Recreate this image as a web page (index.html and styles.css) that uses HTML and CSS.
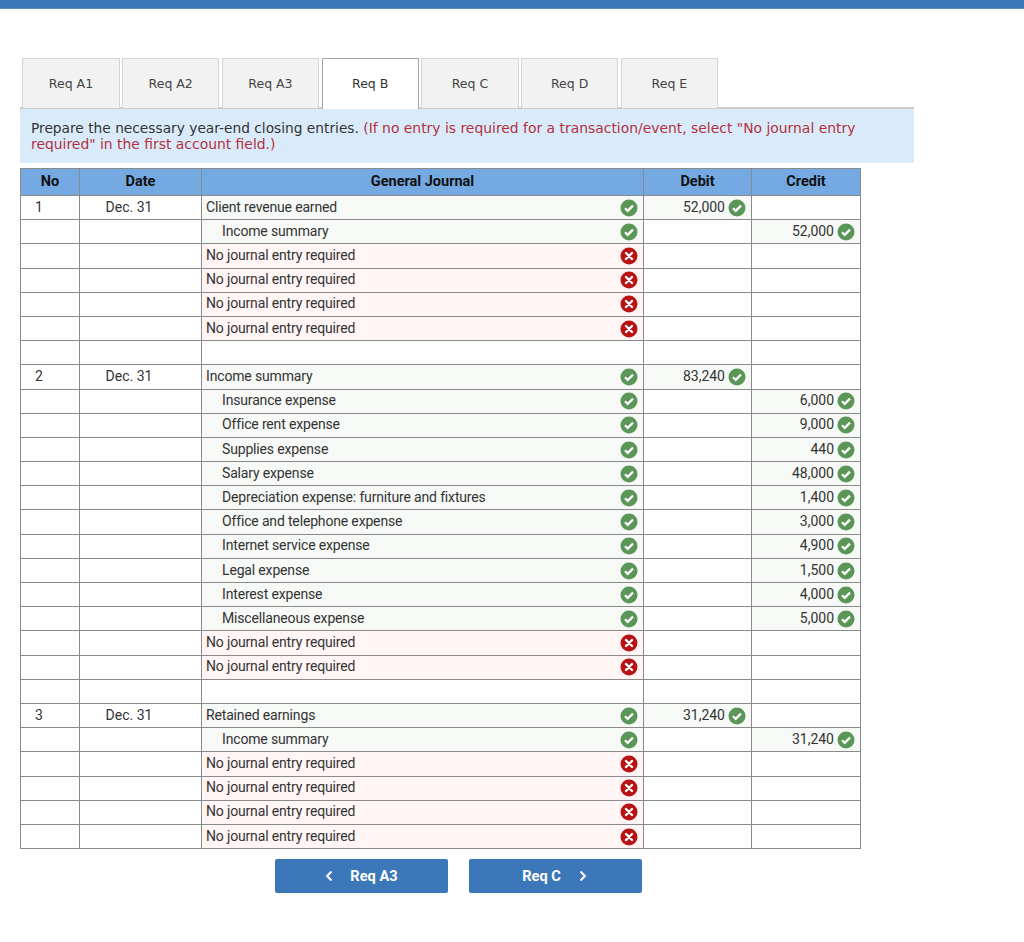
FILE: index.html
```html
<!DOCTYPE html>
<html lang="en">
<head>
<meta charset="utf-8">
<title>Req B</title>
<link rel="stylesheet" href="styles.css">
</head>
<body>
<svg class="defs" width="0" height="0" aria-hidden="true">
  <symbol id="ok" viewBox="0 0 18 18"><circle cx="9" cy="9" r="8.5" fill="#5a9658"/><path d="M5 9.3l2.7 2.6L13 6.6" fill="none" stroke="#fff" stroke-width="2.2"/></symbol>
  <symbol id="no" viewBox="0 0 18 18"><circle cx="9" cy="9" r="8.5" fill="#b81314"/><path d="M6 6l6 6M12 6l-6 6" fill="none" stroke="#fff" stroke-width="2.4" stroke-linecap="round"/></symbol>
</svg>
<div class="topbar"></div>
<main class="page">
  <nav class="tabs">
    <a class="tab">Req A1</a><a class="tab">Req A2</a><a class="tab">Req A3</a><a class="tab active">Req B</a><a class="tab">Req C</a><a class="tab">Req D</a><a class="tab">Req E</a>
  </nav>
  <p class="prompt">Prepare the necessary year-end closing entries. <span class="note">(If no entry is required for a transaction/event, select "No journal entry required" in the first account field.)</span></p>
  <table class="journal">
    <colgroup><col class="c-no"><col class="c-date"><col class="c-acct"><col class="c-amt"><col class="c-amt2"></colgroup>
    <thead><tr><th>No</th><th>Date</th><th>General Journal</th><th>Debit</th><th>Credit</th></tr></thead>
    <tbody>
      <tr><td class="no">1</td><td class="date">Dec. 31</td><td class="acct right"><span>Client revenue earned</span><svg class="ic"><use href="#ok"/></svg></td><td class="amt right"><span>52,000</span><svg class="ic"><use href="#ok"/></svg></td><td></td></tr>
      <tr><td></td><td></td><td class="acct right"><span class="ind">Income summary</span><svg class="ic"><use href="#ok"/></svg></td><td></td><td class="amt right"><span>52,000</span><svg class="ic"><use href="#ok"/></svg></td></tr>
      <tr><td></td><td></td><td class="acct wrong"><span>No journal entry required</span><svg class="ic"><use href="#no"/></svg></td><td></td><td></td></tr>
      <tr><td></td><td></td><td class="acct wrong"><span>No journal entry required</span><svg class="ic"><use href="#no"/></svg></td><td></td><td></td></tr>
      <tr><td></td><td></td><td class="acct wrong"><span>No journal entry required</span><svg class="ic"><use href="#no"/></svg></td><td></td><td></td></tr>
      <tr><td></td><td></td><td class="acct wrong"><span>No journal entry required</span><svg class="ic"><use href="#no"/></svg></td><td></td><td></td></tr>
      <tr><td></td><td></td><td></td><td></td><td></td></tr>
      <tr><td class="no">2</td><td class="date">Dec. 31</td><td class="acct right"><span>Income summary</span><svg class="ic"><use href="#ok"/></svg></td><td class="amt right"><span>83,240</span><svg class="ic"><use href="#ok"/></svg></td><td></td></tr>
      <tr><td></td><td></td><td class="acct right"><span class="ind">Insurance expense</span><svg class="ic"><use href="#ok"/></svg></td><td></td><td class="amt right"><span>6,000</span><svg class="ic"><use href="#ok"/></svg></td></tr>
      <tr><td></td><td></td><td class="acct right"><span class="ind">Office rent expense</span><svg class="ic"><use href="#ok"/></svg></td><td></td><td class="amt right"><span>9,000</span><svg class="ic"><use href="#ok"/></svg></td></tr>
      <tr><td></td><td></td><td class="acct right"><span class="ind">Supplies expense</span><svg class="ic"><use href="#ok"/></svg></td><td></td><td class="amt right"><span>440</span><svg class="ic"><use href="#ok"/></svg></td></tr>
      <tr><td></td><td></td><td class="acct right"><span class="ind">Salary expense</span><svg class="ic"><use href="#ok"/></svg></td><td></td><td class="amt right"><span>48,000</span><svg class="ic"><use href="#ok"/></svg></td></tr>
      <tr><td></td><td></td><td class="acct right"><span class="ind">Depreciation expense: furniture and fixtures</span><svg class="ic"><use href="#ok"/></svg></td><td></td><td class="amt right"><span>1,400</span><svg class="ic"><use href="#ok"/></svg></td></tr>
      <tr><td></td><td></td><td class="acct right"><span class="ind">Office and telephone expense</span><svg class="ic"><use href="#ok"/></svg></td><td></td><td class="amt right"><span>3,000</span><svg class="ic"><use href="#ok"/></svg></td></tr>
      <tr><td></td><td></td><td class="acct right"><span class="ind">Internet service expense</span><svg class="ic"><use href="#ok"/></svg></td><td></td><td class="amt right"><span>4,900</span><svg class="ic"><use href="#ok"/></svg></td></tr>
      <tr><td></td><td></td><td class="acct right"><span class="ind">Legal expense</span><svg class="ic"><use href="#ok"/></svg></td><td></td><td class="amt right"><span>1,500</span><svg class="ic"><use href="#ok"/></svg></td></tr>
      <tr><td></td><td></td><td class="acct right"><span class="ind">Interest expense</span><svg class="ic"><use href="#ok"/></svg></td><td></td><td class="amt right"><span>4,000</span><svg class="ic"><use href="#ok"/></svg></td></tr>
      <tr><td></td><td></td><td class="acct right"><span class="ind">Miscellaneous expense</span><svg class="ic"><use href="#ok"/></svg></td><td></td><td class="amt right"><span>5,000</span><svg class="ic"><use href="#ok"/></svg></td></tr>
      <tr><td></td><td></td><td class="acct wrong"><span>No journal entry required</span><svg class="ic"><use href="#no"/></svg></td><td></td><td></td></tr>
      <tr><td></td><td></td><td class="acct wrong"><span>No journal entry required</span><svg class="ic"><use href="#no"/></svg></td><td></td><td></td></tr>
      <tr><td></td><td></td><td></td><td></td><td></td></tr>
      <tr><td class="no">3</td><td class="date">Dec. 31</td><td class="acct right"><span>Retained earnings</span><svg class="ic"><use href="#ok"/></svg></td><td class="amt right"><span>31,240</span><svg class="ic"><use href="#ok"/></svg></td><td></td></tr>
      <tr><td></td><td></td><td class="acct right"><span class="ind">Income summary</span><svg class="ic"><use href="#ok"/></svg></td><td></td><td class="amt right"><span>31,240</span><svg class="ic"><use href="#ok"/></svg></td></tr>
      <tr><td></td><td></td><td class="acct wrong"><span>No journal entry required</span><svg class="ic"><use href="#no"/></svg></td><td></td><td></td></tr>
      <tr><td></td><td></td><td class="acct wrong"><span>No journal entry required</span><svg class="ic"><use href="#no"/></svg></td><td></td><td></td></tr>
      <tr><td></td><td></td><td class="acct wrong"><span>No journal entry required</span><svg class="ic"><use href="#no"/></svg></td><td></td><td></td></tr>
      <tr><td></td><td></td><td class="acct wrong"><span>No journal entry required</span><svg class="ic"><use href="#no"/></svg></td><td></td><td></td></tr>
    </tbody>
  </table>
  <div class="pager">
    <a class="btn"><svg class="chev" viewBox="0 0 8 12"><path d="M6.5 1.5L2 6l4.5 4.5" fill="none" stroke="#fff" stroke-width="2"/></svg>Req A3</a>
    <a class="btn"><span>Req C</span><svg class="chev after" viewBox="0 0 8 12"><path d="M1.5 1.5L6 6l-4.5 4.5" fill="none" stroke="#fff" stroke-width="2"/></svg></a>
  </div>
</main>
</body>
</html>
```
FILE: styles.css
```css
html, body { margin: 0; padding: 0; background: #fff; }
body { font-family: Roboto, "Liberation Sans", sans-serif; color: #333; height: 942px; overflow: hidden; }
.defs { display: block; height: 0; }
.topbar { height: 8px; background: #3b77b9; border-bottom: 1px solid #5c8dc6; }
.page { width: 894px; margin-left: 20px; padding-top: 49px; }

.tabs { display: flex; gap: 2.55px; padding-left: 2.4px; border-bottom: 2px solid #ccc; height: 49px; }
.tab { box-sizing: border-box; width: 97.2px; height: 50px; text-align: center; font: 12.5px/50px "DejaVu Sans", sans-serif; color: #444; background: #f2f2f2; border: 1px solid #d4d4d4; border-bottom: 0; }
.tab.active { background: #fff; border-color: #a6a6a6; height: 51px; color: #333; position: relative; }

.prompt { margin: 0; box-sizing: border-box; height: 54px; padding: 11px 11px 0; background: #d9ebfa; font: 13.76px/16px "DejaVu Sans", sans-serif; color: #333; }
.note { color: #b3303e; font-size: 13.9px; }

.journal { box-sizing: border-box; width: 841px; margin-top: 5px; border-collapse: collapse; table-layout: fixed; font-size: 14px; }
.c-no { width: 59px; }
.c-date { width: 122px; }
.c-acct { width: 442px; }
.c-amt { width: 108px; }
.c-amt2 { width: 109px; }
.journal th, .journal td { border: 1px solid #8a8a8a; padding: 0; height: 24.19px; box-sizing: border-box; }
.journal th { height: 27px; padding-bottom: 2px; background: #75a9e2; color: #111; font-weight: 700; font-size: 14.5px; text-align: center; }
.journal td { white-space: nowrap; line-height: 18px; }
.journal td.no, .journal td.date { padding-bottom: 2px; }
.no { text-align: left; text-indent: 14px; }
.date { text-align: center; text-indent: -23px; }
.journal td.acct { padding-left: 4px; padding-right: 4px; font-size: 14px; letter-spacing: -0.16px; }
.journal td.amt { padding-right: 5px; text-align: right; }
.acct span, .amt span { display: inline-block; vertical-align: middle; padding-bottom: 2px; }
.acct span { width: 411px; }
.acct .ind { text-indent: 16px; }
.ic { display: inline-block; width: 18px; height: 18px; vertical-align: middle; margin-left: 3px; }
.right { background: #f6f9f6; }
.wrong { background: #fff5f4; }

.pager { display: flex; gap: 21px; padding-left: 255px; margin-top: 10px; }
.btn { display: flex; align-items: center; justify-content: center; width: 173px; height: 34px; background: #3b77b9; border-radius: 2px; color: #fff; font-weight: 700; font-size: 14.6px; }
.chev { width: 8px; height: 12px; margin-right: 17px; }
.chev.after { margin-right: 2px; margin-left: 18px; }
```
